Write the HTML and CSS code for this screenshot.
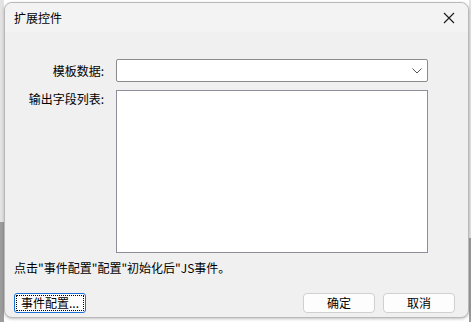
FILE: index.html
```html
<!DOCTYPE html>
<html>
<head>
    <title>扩展控件</title>
    <link rel="stylesheet" href="styles.css">
</head>
<body>
    <div class="backdrop">
        <div class="dialog">
            <div class="titlebar">
                <span class="title">扩展控件</span>
                <svg class="close" width="12" height="12" viewBox="0 0 12 12"><path d="M1 1 L11 11 M11 1 L1 11" stroke="#1a1a1a" stroke-width="1.1" fill="none"/></svg>
            </div>
            <div class="content">
                <div class="form">
                    <label class="label">模板数据:</label>
                    <div class="combo">
                        <svg class="chevron" width="10" height="6" viewBox="0 0 10 6"><path d="M0.5 0.5 L5 5 L9.5 0.5" stroke="#555" stroke-width="1" fill="none"/></svg>
                    </div>
                    <label class="label">输出字段列表:</label>
                    <div class="listbox"></div>
                </div>
                <div class="hint">点击"事件配置"配置"初始化后"JS事件。</div>
                <div class="buttons">
                    <button class="btn focus">事件配置...</button>
                    <span class="spacer"></span>
                    <button class="btn">确定</button>
                    <button class="btn">取消</button>
                </div>
            </div>
        </div>
    </div>
</body>
</html>
```

FILE: styles.css
```css
body { margin: 0; font-family: "Noto Sans CJK SC", "Liberation Sans", sans-serif; font-size: 12px; color: #000; }
.backdrop {
    width: 471px; height: 322px; overflow: hidden; box-sizing: border-box;
    padding: 2px 2px 0 4px;
    background:
        linear-gradient(to bottom, transparent 0, transparent 222px, #9c9c9c 222px) left / 4px 100% no-repeat,
        linear-gradient(to bottom, transparent 0, transparent 238px, #9c9c9c 238px) right / 2px 100% no-repeat,
        linear-gradient(to bottom, #e3e3e3, #e3e3e3) left top / 4px 100% no-repeat,
        linear-gradient(to bottom, #e3e3e3, #e3e3e3) right top / 2px 100% no-repeat,
        #fff;
}
.dialog {
    height: 316px; box-sizing: border-box;
    background: #f0f0f0; border: 1px solid #b9b9b9; border-radius: 8px;
    box-shadow: 0 1px 3px rgba(0,0,0,0.25);
    display: flex; flex-direction: column;
}
.titlebar { height: 29px; display: flex; align-items: center; padding: 0 10px 0 9px; background: #f3f3f3; border-radius: 8px 8px 0 0; }
.title { flex: 1; line-height: 16px; }
.close { margin-right: 3px; }
.content { flex: 1; display: flex; flex-direction: column; padding: 27px 13px 0 9px; }
.form { display: grid; grid-template-columns: 90px 312px; column-gap: 12px; row-gap: 8px; }
.label { text-align: right; line-height: 16px; }
.form .label:first-child { padding-top: 4px; }
.form .label:nth-child(3) { padding-top: 1px; }
.combo {
    height: 23px; box-sizing: border-box; background: #fff;
    border: 1px solid #8b8b8b; border-radius: 2px;
    display: flex; align-items: center; justify-content: flex-end; padding-right: 5px;
}
.listbox { height: 163px; box-sizing: border-box; background: #fff; border: 1px solid #8e8e9a; }
.hint { margin-top: 7px; line-height: 16px; }
.buttons { display: flex; margin-top: 17px; gap: 8px; }
.spacer { flex: 1; }
.btn {
    width: 72px; height: 20px; box-sizing: border-box; padding: 0;
    font-family: inherit; font-size: 12px; line-height: 16px; color: #000;
    background: #fdfdfd; border: 1px solid #d0d0d0; border-radius: 4px;
}
.btn.focus { border: 1px solid #1a6fd6; outline: 1px dotted #000; outline-offset: -3px; border-radius: 3px; }
```
